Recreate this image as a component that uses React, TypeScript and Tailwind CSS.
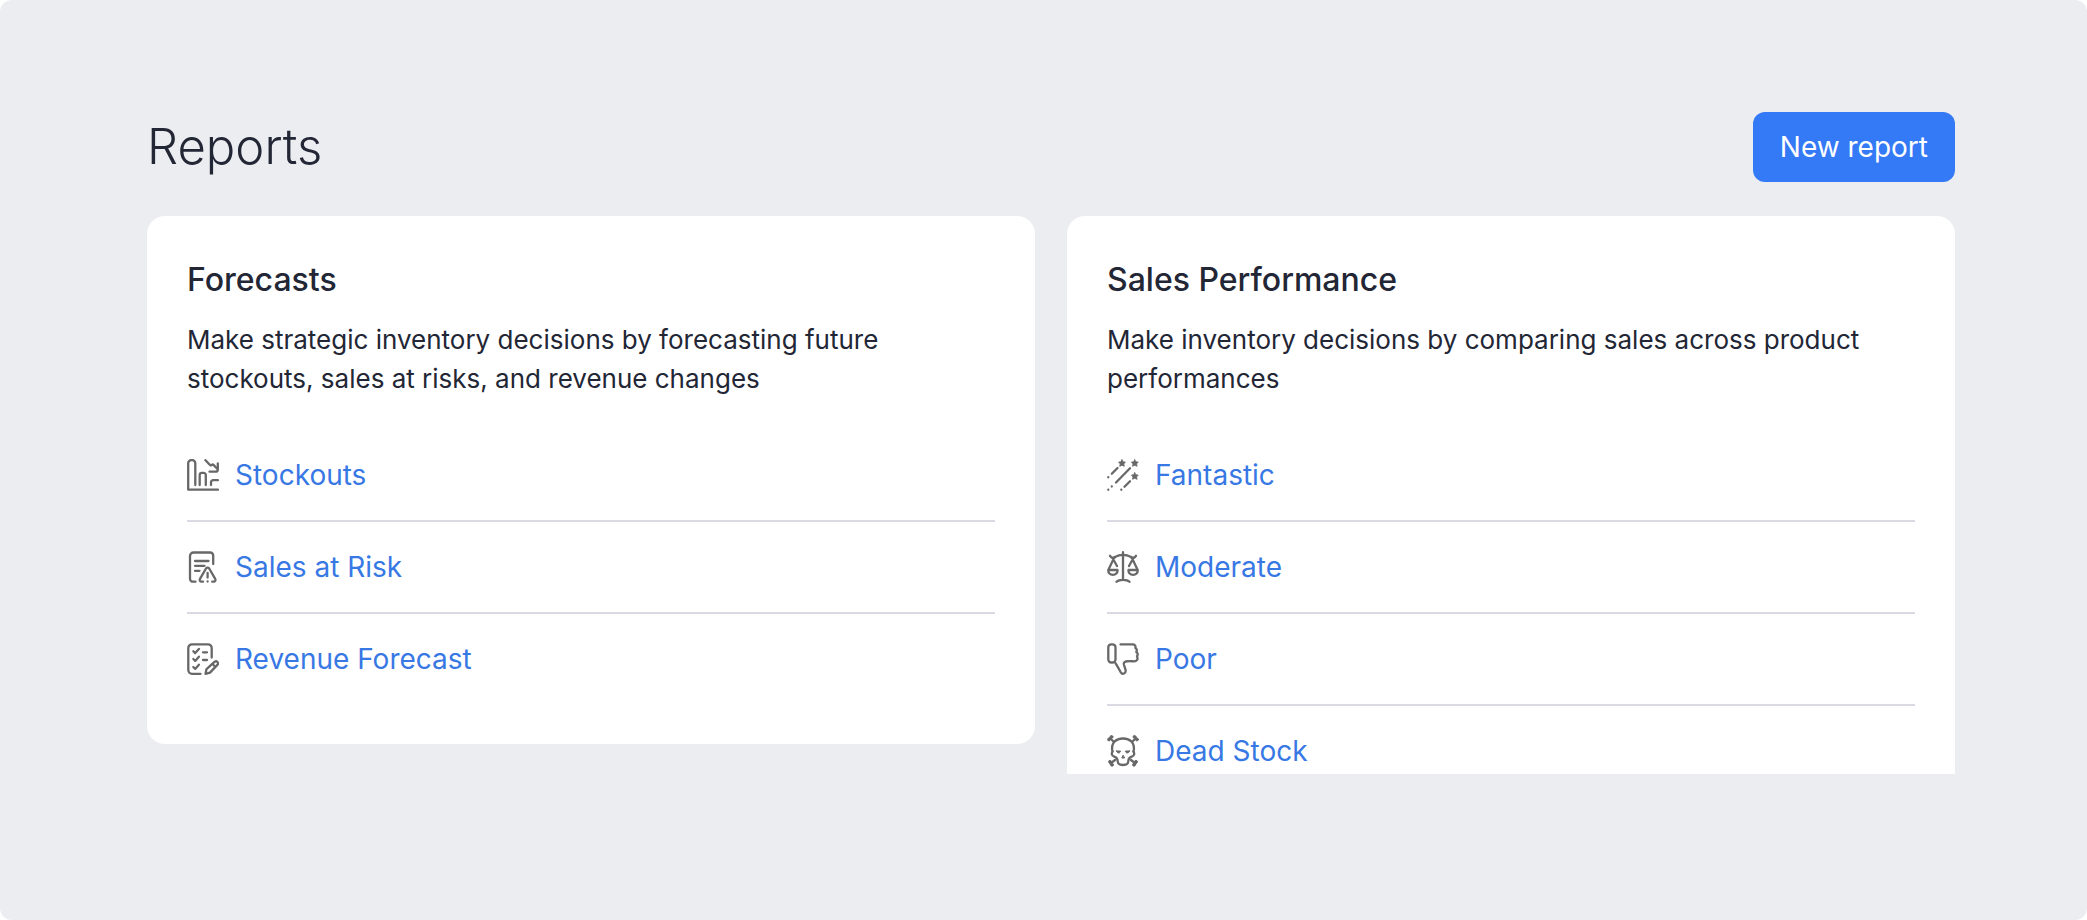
import type { ReactNode } from "react";

interface ReportLink {
  label: string;
  icon: ReactNode;
}

interface ReportGroup {
  title: string;
  description: string;
  links: ReportLink[];
}

function Icon({ children }: { children: ReactNode }) {
  return (
    <svg viewBox="0 0 32 32" fill="none" stroke="currentColor" strokeWidth="2.3" strokeLinecap="round" strokeLinejoin="round"
      className="size-8 shrink-0 text-[#686868]" aria-hidden="true">
      {children}
    </svg>
  );
}

const STAR = "M0-3.5 1.1-1.4 3.4-1.1 1.8.7 2.3 3.1 0 2.1-2.3 3.1-1.8.7-3.4-1.1-1.1-1.4Z";

const stockoutsIcon = (
  <Icon>
    <path d="M8.3 26V4.2a3 3 0 0 0-3-3H4.2a3 3 0 0 0-3 3v26.500H31" />
    <path d="M12.700 26V16a2.200 2.200 0 0 1 2.200-2.200h1.700a2.200 2.200 0 0 1 2.200 2.200v10" />
    <path d="M24 26v-2.700a2.200 2.200 0 0 1 2.200-2.200H31" />
    <path d="m18.500 1.200 4.500 4.800q1 1 1.800-.1.900-1 1.700 0L30 9.500" />
    <path d="M30.800 4.500v6q0 2.200-2.200 2.200h-6.100" />
  </Icon>
);

const riskIcon = (
  <Icon>
    <path d="M8.500 30.700H6a3 3 0 0 1-3-3V5a3.500 3.500 0 0 1 3.500-3.500h16.700A3 3 0 0 1 26.200 4.500V13" />
    <path d="M8 10h13.500M8 14.800h9.500M8 19.800h4.500" />
    <path d="M16 30.700h-1.500c-1.500 0-2.300-1.500-1.500-2.800l6-10.400c.7-1.200 2.500-1.200 3.200 0l6 10.400c.8 1.300 0 2.800-1.500 2.800h-1.500" />
    <path d="M20.600 22v4.500M20.600 30.500v.1" />
  </Icon>
);

const revenueIcon = (
  <Icon>
    <path d="M13.500 30.800H5a3.700 3.700 0 0 1-3.700-3.700V5A3.700 3.700 0 0 1 5 1.300h16A3.700 3.700 0 0 1 24.700 5v9.500" />
    <path d="m6.300 8.200 1.900 1.900 3.700-4.200M6.300 16l1.900 1.900 3.700-4.200M6.300 24l1.900 1.900 3.700-4.200M16 9.300h4M16 17h4" />
    <path d="m18.500 30.800 1-4.700 8.300-7.400c1.900-1.300 4.200 1 2.800 2.900l-7.600 8Z" />
    <path d="m25.500 21 2.700 2.700" />
  </Icon>
);

const fantasticIcon = (
  <Icon>
    <g fill="currentColor" strokeWidth="0.800">
      <path d={STAR} transform="translate(15 4.200)" />
      <path d={STAR} transform="translate(27.800 4.200)" />
      <path d={STAR} transform="translate(27.800 17.200)" />
    </g>
    <path d="m10.500 9-5.700 5.700M23 9.300 9 23.500M23 22.300l-5.500 5.500" />
    <path d="M1.300 18.200v.1M4.800 27.500v.1M1.300 30.700v.1M14.300 30.700v.1" />
  </Icon>
);

const moderateIcon = (
  <Icon>
    <path d="M16 1.200v27.500M9.500 30.800q2-2 6.500-2t6.500 2" />
    <path d="M3 4.800c1.500 2.500 4 2.500 5.800.8Q11.500 3.800 16 3.800t7.200 1.800c1.800 1.700 4.300 1.700 5.800-.8" />
    <path d="M7.500 6 1.800 18M5.500 7l4.500 8M24.500 6l5.700 12M26.500 7 22 15" />
    <path d="M1.300 19h9.200c.3 2.800-1.800 4.900-4.600 4.900S1 21.800 1.300 19ZM21.500 19h9.200c.3 2.800-1.800 4.900-4.600 4.900s-4.900-2.100-4.600-4.900Z" />
  </Icon>
);

const poorIcon = (
  <Icon>
    <rect x="1.300" y="1.300" width="7.200" height="18.200" rx="3" />
    <path d="M13.500 1.400h12c2.400 0 3.400 1.400 2.900 3.600 1.500.8 1.800 2.400.9 4 1.600 1 1.800 3 .7 4.300 1.400 3-.2 5-3 5-2 0-5.300-.4-8.500.2-1.600.5-2 1.800-1.500 3.500l1.500 4.700c1 4-3.200 5.300-4.800 2.500-2-3.700-3.500-6.200-5.200-9" />
  </Icon>
);

const deadStockIcon = (
  <Icon>
    <path d="M5.500 16.500C3.500 8 9 3.500 16 3.500S28.500 8 26.500 16.500" />
    <path d="M5.500 16.500c-1.300 2.200-.8 4 1.500 5 2 .7 3.200 1 3.500 3.500.3 3.500 1 5 5.500 5s5.200-1.500 5.500-5c.3-2.500 1.500-2.800 3.500-3.500 2.300-1 2.800-2.800 1.500-5" />
    <path d="m3 3 3.500 3.500M29 3l-3.500 3.500M3.500 28.500 8 25M28.500 28.500 24 25" />
    <g fill="currentColor" strokeWidth="1">
      <circle cx="4.500" cy="1.900" r="1.400" /><circle cx="2" cy="4.500" r="1.400" />
      <circle cx="27.500" cy="1.900" r="1.400" /><circle cx="30" cy="4.500" r="1.400" />
      <circle cx="3" cy="26.800" r="1.400" /><circle cx="5" cy="29.800" r="1.400" />
      <circle cx="29" cy="26.800" r="1.400" /><circle cx="27" cy="29.800" r="1.400" />
      <path d="M9.500 16h4c0 2.500-3.500 2.800-4 0ZM22.500 16h-4c0 2.500 3.500 2.800 4 0ZM16 20.500l-1.200 2.500h2.400Z" />
    </g>
  </Icon>
);

const groups: ReportGroup[] = [
  {
    title: "Forecasts",
    description: "Make strategic inventory decisions by forecasting future stockouts, sales at risks, and revenue changes",
    links: [
      { label: "Stockouts", icon: stockoutsIcon },
      { label: "Sales at Risk", icon: riskIcon },
      { label: "Revenue Forecast", icon: revenueIcon },
    ],
  },
  {
    title: "Sales Performance",
    description: "Make inventory decisions by comparing sales across product performances",
    links: [
      { label: "Fantastic", icon: fantasticIcon },
      { label: "Moderate", icon: moderateIcon },
      { label: "Poor", icon: poorIcon },
      { label: "Dead Stock", icon: deadStockIcon },
    ],
  },
];

function ReportCard({ title, description, links }: ReportGroup) {
  return (
    <section className="rounded-[18px] bg-white px-10 pt-11 pb-10">
      <h2 className="text-[32px] leading-10 font-medium">{title}</h2>
      <p className="mt-5 text-[26px] leading-[39px]">{description}</p>
      <ul className="mt-8 divide-y-2 divide-[#d9dae2]">
        {links.map(({ label, icon }) => (
          <li key={label}>
            <a href="#" className="flex h-[90px] items-center gap-4 text-[28px] leading-9 text-[#3878e4] hover:underline">
              {icon}
              {label}
            </a>
          </li>
        ))}
      </ul>
    </section>
  );
}

export default function App() {
  return (
    <div className="min-h-screen bg-white font-['Inter',sans-serif] text-[#222635]">
      <main className="min-h-screen rounded-xl bg-[#ebedf1] pt-28 pr-[132px] pl-[147px]">
        <header className="flex items-center justify-between">
          <h1 className="text-[49px] leading-[70px] font-light">Reports</h1>
          <button type="button" className="h-[70px] rounded-xl bg-[#3479f6] px-[27px] text-[28px] text-white hover:bg-blue-600">
            New report
          </button>
        </header>

        {/* the taller card is cut off at the bottom of this area */}
        <div className="mt-[34px] grid max-h-[558px] grid-cols-2 items-start gap-8 overflow-hidden">
          {groups.map((group) => (
            <ReportCard key={group.title} {...group} />
          ))}
        </div>
      </main>
    </div>
  );
}
